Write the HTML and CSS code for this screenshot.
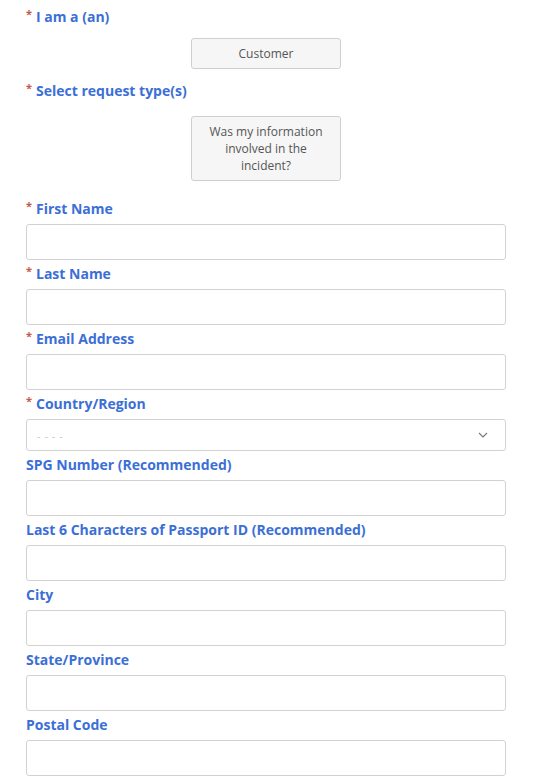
FILE: index.html
```html
<!DOCTYPE html>
<html lang="en">
<head>
<meta charset="utf-8">
<link rel="stylesheet" href="styles.css">
</head>
<body>
<form class="form">
  <div class="label label-top"><span class="req">*</span>I am a (an)</div>
  <div class="choices choices-1">
    <button type="button" class="choice">Customer</button>
  </div>
  <div class="label label-sel"><span class="req">*</span>Select request type(s)</div>
  <div class="choices choices-2">
    <button type="button" class="choice">Was my information involved in the incident?</button>
  </div>

  <div class="field first">
    <label class="label"><span class="req">*</span>First Name</label>
    <input class="input" type="text">
  </div>
  <div class="field">
    <label class="label"><span class="req">*</span>Last Name</label>
    <input class="input" type="text">
  </div>
  <div class="field">
    <label class="label"><span class="req">*</span>Email Address</label>
    <input class="input" type="text">
  </div>
  <div class="field">
    <label class="label"><span class="req">*</span>Country/Region</label>
    <div class="select">
      <span class="placeholder">- - - -</span>
      <svg class="chev" width="10" height="6" viewBox="0 0 10 6"><path d="M1 1 L5 5 L9 1" fill="none" stroke="#777" stroke-width="1.1"/></svg>
    </div>
  </div>
  <div class="field">
    <label class="label">SPG Number (Recommended)</label>
    <input class="input" type="text">
  </div>
  <div class="field">
    <label class="label">Last 6 Characters of Passport ID (Recommended)</label>
    <input class="input" type="text">
  </div>
  <div class="field">
    <label class="label">City</label>
    <input class="input" type="text">
  </div>
  <div class="field">
    <label class="label">State/Province</label>
    <input class="input" type="text">
  </div>
  <div class="field">
    <label class="label">Postal Code</label>
    <input class="input" type="text">
  </div>
</form>
</body>
</html>
```

FILE: styles.css
```css
html, body {
  margin: 0;
  padding: 0;
  background: #ffffff;
}

body {
  font-family: "Open Sans", "Liberation Sans", sans-serif;
}

.form {
  width: 480px;
  padding: 7px 0 20px 26px;
  display: flex;
  flex-direction: column;
}

.label {
  display: block;
  font-size: 14px;
  line-height: 20px;
  height: 20px;
  font-weight: 700;
  color: #3c6fd6;
}

.req {
  color: #c8574a;
  font-size: 11px;
  line-height: 0;
  position: relative;
  top: -4px;
  margin-right: 4px;
}

.choices {
  display: flex;
  justify-content: center;
}

.choices-1 {
  margin-top: 11px;
  margin-bottom: 12px;
}

.choices-2 {
  margin-top: 15px;
  margin-bottom: 18px;
}

.choice {
  width: 150px;
  padding: 6px 12px;
  border: 1px solid #cfcfcf;
  border-radius: 3px;
  background: #f6f6f6;
  font-family: "Open Sans", "Liberation Sans", sans-serif;
  font-size: 12px;
  line-height: 17px;
  color: #555555;
  text-align: center;
}

.field {
  display: flex;
  flex-direction: column;
  margin-top: 4px;
}

.field.first {
  margin-top: 0;
}

.field .label {
  margin-bottom: 5px;
}

.input {
  box-sizing: border-box;
  width: 480px;
  height: 36px;
  margin: 0;
  border: 1px solid #d2d2d2;
  border-radius: 3px;
  background: #ffffff;
}

.select {
  box-sizing: border-box;
  width: 480px;
  height: 32px;
  border: 1px solid #d2d2d2;
  border-radius: 3px;
  display: flex;
  align-items: center;
  justify-content: space-between;
  padding: 0 17px 0 10px;
}

.placeholder {
  font-size: 11px;
  color: #c8c8c8;
  letter-spacing: 0.5px;
}

.chev {
  display: block;
}
```
